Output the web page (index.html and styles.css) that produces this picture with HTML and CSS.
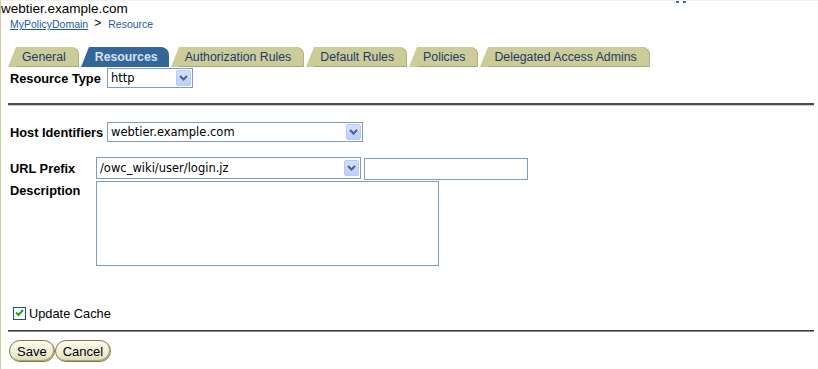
FILE: index.html
```html
<!DOCTYPE html>
<html>
<head>
<meta charset="utf-8">
<link rel="stylesheet" href="styles.css">
</head>
<body>
<div class="page">
  <span class="topmark"></span>
  <div class="title">webtier.example.com</div>
  <div class="crumbs"><a href="#">MyPolicyDomain</a><span class="sep">&gt;</span><span class="cur">Resource</span></div>

  <div class="tabs">
    <div class="tab"><span class="tab-body">General</span></div>
    <div class="tab active"><span class="tab-body">Resources</span></div>
    <div class="tab"><span class="tab-body">Authorization Rules</span></div>
    <div class="tab"><span class="tab-body">Default Rules</span></div>
    <div class="tab"><span class="tab-body">Policies</span></div>
    <div class="tab"><span class="tab-body">Delegated Access Admins</span></div>
  </div>

  <div class="row row-type">
    <span class="label">Resource Type</span>
    <div class="select sel-type"><span class="sel-text">http</span><span class="sel-btn"><svg width="9" height="6" viewBox="0 0 9 6"><path d="M1 1 L4.5 4.5 L8 1" fill="none" stroke="#4d6185" stroke-width="2"/></svg></span></div>
  </div>

  <div class="rule rule-1"></div>

  <div class="row row-host">
    <span class="label">Host Identifiers</span>
    <div class="select sel-host"><span class="sel-text">webtier.example.com</span><span class="sel-btn"><svg width="9" height="6" viewBox="0 0 9 6"><path d="M1 1 L4.5 4.5 L8 1" fill="none" stroke="#4d6185" stroke-width="2"/></svg></span></div>
  </div>

  <div class="form-grid">
    <span class="label lbl-url">URL Prefix</span>
    <div class="url-fields">
      <div class="select sel-url"><span class="sel-text">/owc_wiki/user/login.jz</span><span class="sel-btn"><svg width="9" height="6" viewBox="0 0 9 6"><path d="M1 1 L4.5 4.5 L8 1" fill="none" stroke="#4d6185" stroke-width="2"/></svg></span></div>
      <div class="textbox"></div>
    </div>
    <span class="label lbl-desc">Description</span>
    <div class="textarea"></div>
  </div>

  <div class="check-row">
    <span class="checkbox"><svg width="9" height="8" viewBox="0 0 9 8"><path d="M1 3.5 L3.5 6 L8 1" fill="none" stroke="#21a121" stroke-width="2"/></svg></span>
    <span class="check-label">Update Cache</span>
  </div>

  <div class="rule rule-2"></div>

  <div class="buttons">
    <button class="btn">Save</button>
    <button class="btn">Cancel</button>
  </div>
</div>
</body>
</html>
```

FILE: styles.css
```css
html, body {
  margin: 0;
  padding: 0;
  background: #ffffff;
}

body {
  font-family: "Liberation Sans", Arial, sans-serif;
  color: #000;
}

.page {
  position: relative;
  width: 818px;
  height: 369px;
  box-sizing: border-box;
  border-left: 1px solid #cccc99;
  border-top: 1px solid #f4f4e6;
  overflow: hidden;
}

.topmark {
  position: absolute;
  left: 675px;
  top: -1px;
  width: 11px;
  height: 3px;
  background: linear-gradient(90deg, #3e6fb3 0 3px, transparent 3px 7px, #3e6fb3 7px 10px, transparent 10px);
}

.title {
  font-size: 13.5px;
  line-height: 16px;
  height: 16px;
}

.crumbs {
  margin-top: 1px;
  padding-left: 9px;
  font-size: 10.5px;
  line-height: 12px;
  height: 12px;
  display: flex;
  align-items: baseline;
}

.crumbs a {
  color: #1e5a96;
  text-decoration: underline;
}

.crumbs .sep {
  color: #000;
  font-size: 12px;
  margin: 0 7px 0 6px;
  position: relative;
  top: -1px;
}

.crumbs .cur {
  color: #1e5a96;
}

.tabs {
  display: flex;
  margin-top: 17px;
  padding-left: 7px;
  height: 20px;
  gap: 2px;
}

.tab {
  display: flex;
  height: 20px;
}

.tab::before {
  content: "";
  display: block;
  width: 0;
  height: 0;
  border-bottom: 20px solid #cccc99;
  border-left: 8px solid transparent;
}

.tab-body {
  display: block;
  height: 20px;
  box-sizing: border-box;
  padding: 0 13px 0 6px;
  background: #cccc99;
  border-top-right-radius: 8px;
  font-size: 12.3px;
  line-height: 20px;
  color: #1f3a6a;
  white-space: nowrap;
  box-shadow: inset -1px 0 0 #b2b07c, inset 0 -1px 0 #a6a472;
}

.tab.active::before {
  border-bottom-color: #336699;
}

.tab.active .tab-body {
  background: #336699;
  color: #d6e2f0;
  font-weight: bold;
  box-shadow: none;
  padding-right: 11px;
}

.row {
  display: flex;
  align-items: center;
  padding-left: 9px;
}

.label {
  font-size: 12.8px;
  font-weight: bold;
  white-space: nowrap;
}

.select {
  display: flex;
  align-items: center;
  box-sizing: border-box;
  border: 1px solid #7f9db9;
  background: #fff;
  height: 20px;
  padding: 1px;
}

.sel-text {
  flex: 1;
  font-family: "DejaVu Sans", Verdana, sans-serif;
  font-size: 11.5px;
  padding-left: 2px;
  white-space: nowrap;
  overflow: hidden;
}

.sel-btn {
  width: 15px;
  height: 16px;
  box-sizing: border-box;
  border: 1px solid #b9cbf3;
  border-radius: 2px;
  background: linear-gradient(180deg, #d4e0fd 0%, #bccffa 100%);
  display: flex;
  align-items: center;
  justify-content: center;
}

.row-type {
  margin-top: 1px;
}

.row-type .label {
  width: 97px;
}

.sel-type {
  width: 86px;
}

.rule {
  margin-left: 7px;
  width: 806px;
  box-sizing: border-box;
}

.rule-1 {
  margin-top: 15px;
  height: 3px;
  border-top: 2px solid #4a4a4a;
  border-bottom: 1px solid #c9c9c9;
}

.row-host {
  margin-top: 16px;
}

.row-host .label {
  width: 97px;
}

.sel-host {
  width: 256px;
}

.form-grid {
  display: grid;
  grid-template-columns: 86px auto;
  padding-left: 9px;
  margin-top: 15px;
  row-gap: 1px;
}

.lbl-url {
  align-self: center;
}

.lbl-desc {
  align-self: start;
  padding-top: 2px;
}

.url-fields {
  display: flex;
  gap: 3px;
  align-items: flex-start;
}

.sel-url {
  width: 265px;
  height: 22px;
}

.textbox {
  width: 164px;
  height: 22px;
  margin-top: 1px;
  box-sizing: border-box;
  border: 1px solid #7f9db9;
  background: #fff;
}

.textarea {
  width: 343px;
  height: 85px;
  box-sizing: border-box;
  border: 1px solid #7f9db9;
  background: #fff;
}

.check-row {
  display: flex;
  align-items: center;
  margin-top: 40px;
  padding-left: 12px;
  height: 14px;
}

.checkbox {
  width: 13px;
  height: 13px;
  box-sizing: border-box;
  border: 1px solid #1c5180;
  background: #fff;
  display: flex;
  align-items: center;
  justify-content: center;
}

.check-label {
  font-size: 12.8px;
  margin-left: 3px;
}

.rule-2 {
  margin-top: 10px;
  height: 2px;
  border-top: 1px solid #3f3f3f;
  border-bottom: 1px solid #8a8a8a;
}

.buttons {
  display: flex;
  gap: 0;
  margin-top: 8px;
  padding-left: 8px;
}

.btn {
  font-family: "Liberation Sans", Arial, sans-serif;
  font-size: 13px;
  height: 22px;
  box-sizing: border-box;
  padding: 0 7px;
  border: 1px solid #7d7a4c;
  border-radius: 11px;
  background: linear-gradient(180deg, #fbfaef 0%, #ecebcf 70%, #d9d7af 100%);
  color: #000;
  box-shadow: inset -1px -1px 0 #a9a77a;
}
```
